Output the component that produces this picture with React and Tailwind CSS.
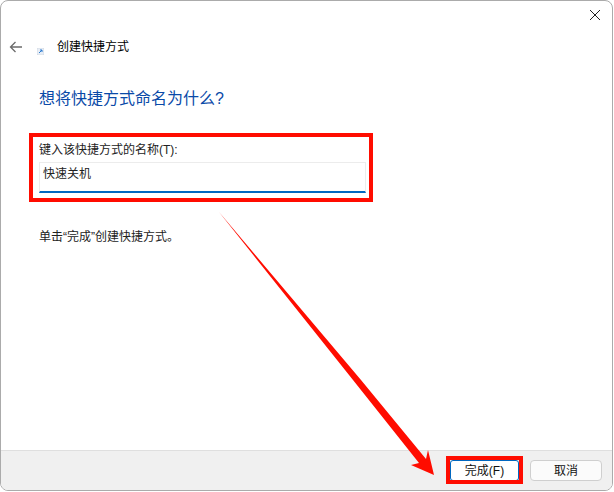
export default function App() {
  const font = { fontFamily: '"Liberation Sans", "Noto Sans CJK SC", sans-serif' };
  return (
    <div className="relative w-[614px] h-[492px] bg-white overflow-hidden" style={font}>
      <div className="flex flex-col w-[613px] h-[491px] border border-[#ababab] rounded-[8px] overflow-hidden bg-white">
        <div className="flex flex-col flex-1">
          <div className="flex justify-end h-[29px]">
            <svg width="10" height="10" viewBox="0 0 10 10" className="mr-[12px] mt-[9px]">
              <path d="M0 0L10 10M10 0L0 10" stroke="#222" strokeWidth="1" fill="none" />
            </svg>
          </div>
          <div className="flex items-center h-[33px]">
            <svg width="14" height="12" viewBox="0 0 14 12" className="ml-[8px]">
              <path d="M13 6H1.5M6.5 1L1.5 6L6.5 11" stroke="#6b6b6b" strokeWidth="1.3" fill="none" />
            </svg>
            <svg width="7" height="7" viewBox="0 0 7 7" className="ml-[14px] mt-[10px]">
              <rect x="0" y="0" width="7" height="7" fill="#e8eef6" stroke="#c4ccd6" strokeWidth="0.5" />
              <path d="M2 5L5 2M3 2H5V4" stroke="#2a7bd0" strokeWidth="1" fill="none" />
            </svg>
            <span className="ml-[13px] text-[12px] leading-[16px] text-black">创建快捷方式</span>
          </div>
          <div className="ml-[38px] mt-[25px] text-[16px] leading-[22px] text-[#0a4aa8]">想将快捷方式命名为什么?</div>
          <div className="ml-[38px] mt-[32px] text-[12px] leading-[16px] text-[#222]">键入该快捷方式的名称(T):</div>
          <div className="ml-[38px] mt-[4px] w-[327px] h-[31px] flex items-center border border-[#ececec] border-b-2 border-b-[#0067c0] pl-[3px] pb-[6px] text-[12px] leading-[16px] text-[#222]">
            快速关机
          </div>
          <div className="ml-[38px] mt-[36px] text-[12px] leading-[16px] text-[#222]">单击“完成”创建快捷方式。</div>
        </div>
        <div className="flex justify-end items-start gap-[11px] h-[40px] bg-[#f0f0f0] border-t border-[#dfdfdf] pt-[9px] pr-[10px]">
          <div className="flex items-center justify-center w-[69px] h-[21px] bg-white border border-[#0067c0] rounded-[3px] text-[12px] text-[#111]">完成(F)</div>
          <div className="flex items-center justify-center w-[72px] h-[21px] bg-[#fbfbfb] border border-[#cfcfcf] rounded-[4px] text-[12px] text-[#111]">取消</div>
        </div>
      </div>
      <div className="absolute left-[29px] top-[133px] w-[344px] h-[69px] border-4 border-[#ff0c00]"></div>
      <div className="absolute left-[446px] top-[456px] w-[77px] h-[28px] border-4 border-[#ff0c00]"></div>
      <svg className="absolute left-0 top-0" width="614" height="492" viewBox="0 0 614 492">
        <polygon points="219,212 361,380 426,459 428,450 434,475 411,465 419,463 353,380" fill="#ff0c00" />
      </svg>
    </div>
  );
}
